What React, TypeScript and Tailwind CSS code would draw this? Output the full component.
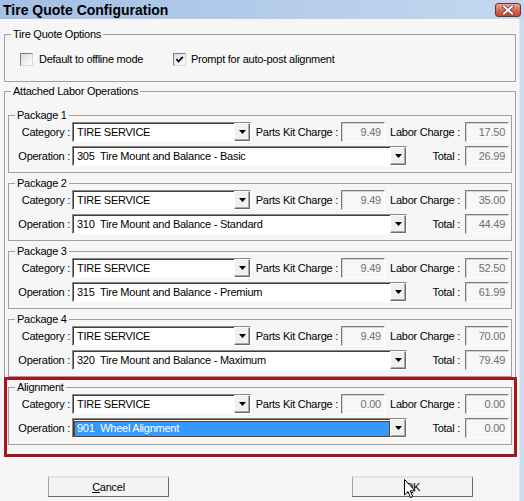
import React from 'react';

interface LaborPackage {
  title: string;
  category: string;
  operation: string;
  parts: string;
  labor: string;
  total: string;
  focused?: boolean;
}

const laborPackages: LaborPackage[] = [
  { title: 'Package 1', category: 'TIRE SERVICE', operation: '305  Tire Mount and Balance - Basic', parts: '9.49', labor: '17.50', total: '26.99' },
  { title: 'Package 2', category: 'TIRE SERVICE', operation: '310  Tire Mount and Balance - Standard', parts: '9.49', labor: '35.00', total: '44.49' },
  { title: 'Package 3', category: 'TIRE SERVICE', operation: '315  Tire Mount and Balance - Premium', parts: '9.49', labor: '52.50', total: '61.99' },
  { title: 'Package 4', category: 'TIRE SERVICE', operation: '320  Tire Mount and Balance - Maximum', parts: '9.49', labor: '70.00', total: '79.49' },
  { title: 'Alignment', category: 'TIRE SERVICE', operation: '901  Wheel Alignment', parts: '0.00', labor: '0.00', total: '0.00', focused: true },
];

const GroupBox: React.FC<{ title: string; className?: string; children: React.ReactNode }> = ({ title, className = '', children }) => (
  <fieldset className={`border border-[#a0a0a0] ${className}`}>
    <legend className="ml-[6px] px-[2px] leading-[13px]">{title}</legend>
    {children}
  </fieldset>
);

const DropArrow = () => (
  <div className="flex h-full w-[16px] shrink-0 items-center justify-center border border-t-white border-l-white border-r-[#6a6a6a] border-b-[#6a6a6a] bg-[#f0f0f0] shadow-[inset_-1px_-1px_0_#a8a8a8]">
    <svg width="7" height="4" viewBox="0 0 7 4">
      <polygon points="0,0 7,0 3.5,4" fill="#000" />
    </svg>
  </div>
);

const ComboBox: React.FC<{ value: string; className: string; selected?: boolean }> = ({ value, className, selected }) => (
  <div className={`flex h-[20px] shrink-0 border border-t-[#8a8a8a] border-l-[#8a8a8a] border-r-white border-b-white bg-white shadow-[inset_1px_1px_0_#3f3f3f] ${className}`}>
    <div className="flex min-w-0 flex-1 items-center pl-[1px] pt-[1px]">
      {selected ? (
        <div className="flex h-[16px] flex-1 items-center border border-[#7a3a08] bg-[#3399ff] pl-[2px] text-white whitespace-pre">
          {value}
        </div>
      ) : (
        <span className="pl-[3px] whitespace-pre">{value}</span>
      )}
    </div>
    <DropArrow />
  </div>
);

const EditBox: React.FC<{ value: string }> = ({ value }) => (
  <div className="flex h-[20px] w-[44px] shrink-0 items-center justify-end border border-t-[#7d7d7d] border-l-[#7d7d7d] border-r-white border-b-white bg-[#f7f7f7] pr-[3px] text-[#707070] shadow-[inset_1px_1px_0_#d0d0d0]">
    {value}
  </div>
);

const CheckBox: React.FC<{ checked?: boolean }> = ({ checked }) => (
  <div className="flex h-[13px] w-[13px] shrink-0 items-center justify-center border border-t-[#7f7f7f] border-l-[#7f7f7f] border-r-[#d8d8d8] border-b-[#d8d8d8] bg-gradient-to-br from-[#dcdcdc] to-white">
    {checked && (
      <svg width="9" height="9" viewBox="0 0 9 9">
        <polyline points="1.5,4.2 3.5,6.5 7.8,1.8" fill="none" stroke="#000" strokeWidth="1.8" />
      </svg>
    )}
  </div>
);

const DialogButton: React.FC<{ children: React.ReactNode; className?: string }> = ({ children, className = '' }) => (
  <button className={`flex h-[21px] w-[121px] items-center justify-center border-t-2 border-l border-r border-b border-t-[#e3e3e3] border-l-[#a6a6a6] border-r-[#6b6b6b] border-b-[#6b6b6b] bg-[#f3f3f3] ${className}`}>
    {children}
  </button>
);

const PackageBox: React.FC<{ pkg: LaborPackage }> = ({ pkg }) => (
  <GroupBox title={pkg.title}>
    <div className="flex flex-col gap-[4px] pb-[6px]">
      <div className="flex h-[20px] items-center">
        <div className="w-[63px] shrink-0 pr-[2px] text-right">Category :</div>
        <ComboBox value={pkg.category} className="w-[179px]" />
        <div className="w-[90px] shrink-0 pr-[3px] text-right">Parts Kit Charge :</div>
        <EditBox value={pkg.parts} />
        <div className="w-[80px] shrink-0 pr-[5px] text-right">Labor Charge :</div>
        <EditBox value={pkg.labor} />
      </div>
      <div className="flex h-[20px] items-center">
        <div className="w-[63px] shrink-0 pr-[2px] text-right">Operation :</div>
        <ComboBox value={pkg.operation} className="w-[335px]" selected={pkg.focused} />
        <div className="w-[58px] shrink-0 pr-[5px] text-right">Total :</div>
        <EditBox value={pkg.total} />
      </div>
    </div>
  </GroupBox>
);

export default function App() {
  return (
    <div className="relative flex h-[501px] w-[524px] flex-col overflow-hidden bg-[#f6f6f6] font-['Liberation_Sans',Arial,sans-serif] text-[11px] leading-[13px] tracking-[-0.25px] text-black">
      {/* Title bar */}
      <div className="flex h-[19px] shrink-0 items-center bg-gradient-to-r from-[#a3bfe3] to-[#c3d8f1] pl-[3px]">
        <span className="flex-1 text-[14px] font-bold leading-[16px] tracking-normal">Tire Quote Configuration</span>
        <div className="mr-[3px] mt-[1px] flex h-[14px] w-[26px] items-center justify-center rounded-[3px] border border-[#74302a] bg-gradient-to-b from-[#e9a999] via-[#d46b55] to-[#c0472f]">
          <svg width="12" height="10" viewBox="0 0 12 10">
            <path d="M2 1.5 L10 8.5 M10 1.5 L2 8.5" stroke="#5a3a3a" strokeWidth="3.4" strokeLinecap="square" />
            <path d="M2 1.5 L10 8.5 M10 1.5 L2 8.5" stroke="#fff" strokeWidth="2" strokeLinecap="square" />
          </svg>
        </div>
      </div>

      <div className="flex flex-1">
        <div className="w-[519px]">
          <GroupBox title="Tire Quote Options" className="ml-[4px] mt-[9px] w-[512px]">
            <div className="flex items-center pb-[15px] pl-[15px] pt-[12px]">
              <div className="flex w-[153px] items-center">
                <CheckBox />
                <span className="ml-[6px]">Default to offline mode</span>
              </div>
              <CheckBox checked />
              <span className="ml-[5px]">Prompt for auto-post alignment</span>
            </div>
          </GroupBox>

          <GroupBox title="Attached Labor Operations" className="ml-[4px] mt-[3px] w-[512px]">
            <div className="flex flex-col gap-[4px] px-[3px] pb-[9px] pt-[11px]">
              {laborPackages.map((pkg) => (
                <PackageBox key={pkg.title} pkg={pkg} />
              ))}
            </div>
          </GroupBox>

          <div className="mt-[21px] flex pl-[48px]">
            <DialogButton>
              <span className="underline">C</span>ancel
            </DialogButton>
            <DialogButton className="ml-[183px]">
              <span className="underline">O</span>K
            </DialogButton>
          </div>
        </div>
        {/* Window frame edge */}
        <div className="w-[5px] border-l border-l-[#e2e8ef] bg-[#cadcf1]" />
      </div>

      {/* Highlight around the alignment group */}
      <div className="pointer-events-none absolute left-[4px] top-[377px] h-[80px] w-[513px] border-[3px] border-[#a5161f]" />

      {/* Mouse pointer */}
      <svg className="pointer-events-none absolute left-[404px] top-[479px]" width="12" height="20" viewBox="0 0 12 20">
        <path d="M0.5 0.5 L0.5 16 L4 12.6 L6.6 18.6 L8.8 17.6 L6.3 11.8 L11 11.8 Z" fill="#fff" stroke="#000" strokeWidth="1" />
      </svg>
    </div>
  );
}
